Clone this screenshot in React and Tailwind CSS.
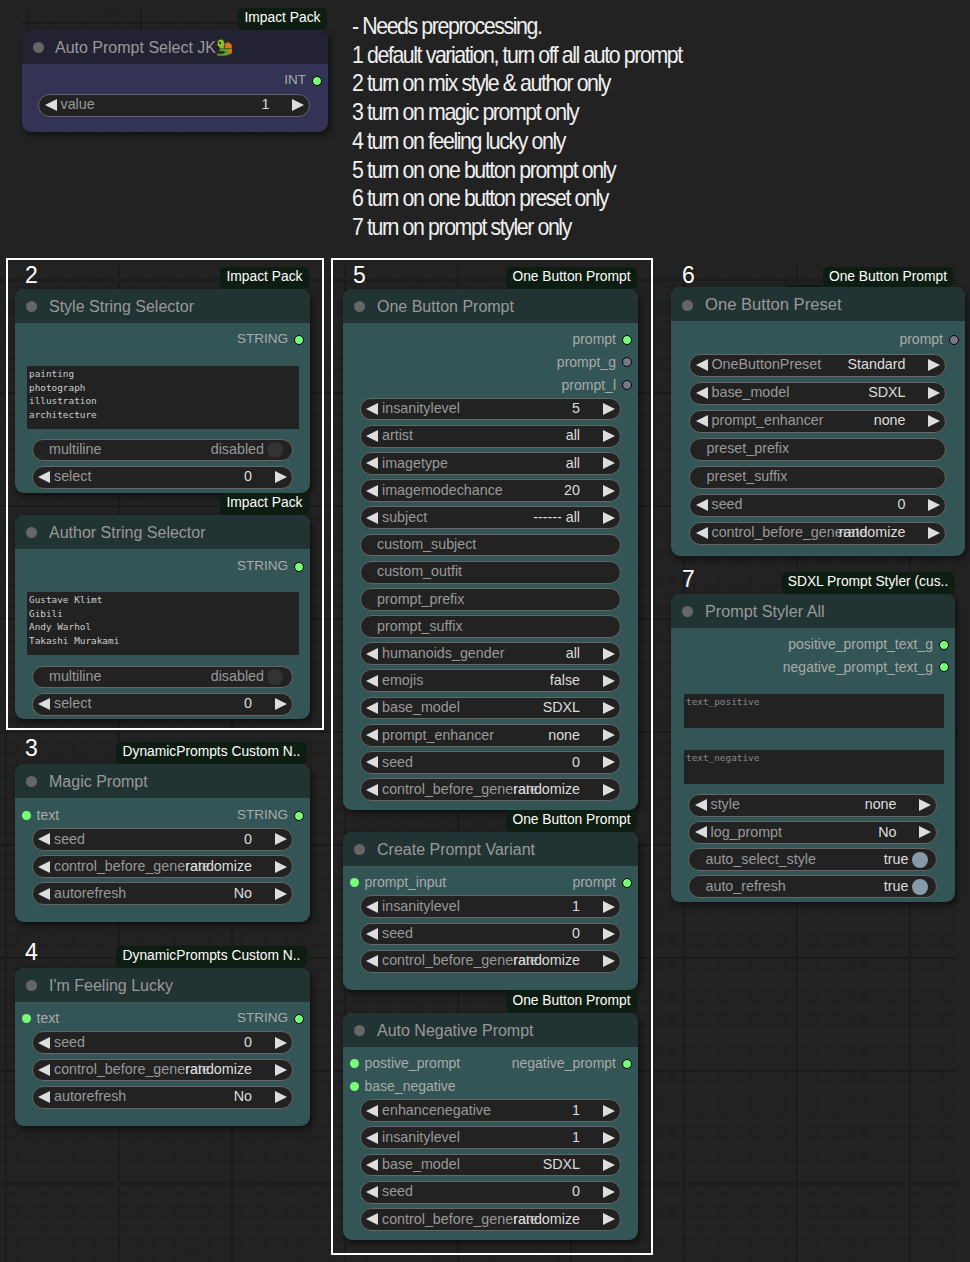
import React from "react";

const Left = () => (
  <svg width="12" height="12" viewBox="0 0 12 12" className="shrink-0">
    <polygon points="0,6 12,0 12,12" fill="#ddd" />
  </svg>
);
const Right = () => (
  <svg width="12" height="12" viewBox="0 0 12 12" className="shrink-0">
    <polygon points="12,6 0,0 0,12" fill="#ddd" />
  </svg>
);

function Combo({ label, value, h = "h-[22.8px]" }) {
  return (
    <div className={`${h} flex items-center rounded-full border-[1.5px] border-[#666] bg-[#222] pl-[5.5px] pr-[5px] text-[14.3px] whitespace-nowrap`}>
      <Left />
      <span className="ml-[4px] w-0 grow text-[#999]">{label}</span>
      <span className="relative text-[#ddd]">{value}</span>
      <span className="w-[22.5px] shrink-0" />
      <Right />
    </div>
  );
}
function TextW({ label, h = "h-[22.8px]" }) {
  return (
    <div className={`${h} flex items-center rounded-full border-[1.5px] border-[#666] bg-[#222] pl-[16.5px] text-[14.3px] text-[#999]`}>
      {label}
    </div>
  );
}
function Toggle({ label, value, on }) {
  return (
    <div className="h-[22.8px] flex items-center justify-between rounded-full border-[1.5px] border-[#666] bg-[#222] pl-[16.5px] pr-[8.5px] text-[14.3px] text-[#999]">
      <span>{label}</span>
      <span className="flex items-center gap-[3px]">
        <span className={on ? "text-[#ddd]" : "text-[#999]"}>{value}</span>
        <span className={on ? "h-[16px] w-[16px] rounded-full bg-[#89a]" : "h-[16px] w-[16px] rounded-full bg-[#333]"} />
      </span>
    </div>
  );
}
function Widgets({ className, children }) {
  return <div className={`flex flex-col gap-[4.4px] ${className}`}>{children}</div>;
}
function Slot({ l, r, rc = "bg-[#7f7]", rSize = "text-[14px]", className = "" }) {
  return (
    <div className={`h-[22.8px] flex items-center justify-between text-[14px] text-[#aaa] ${className}`}>
      <span className="flex items-center">
        {l && <span className="ml-[6.5px] h-[9px] w-[9px] rounded-full bg-[#7f7]" />}
        {l && <span className="ml-[6px]">{l}</span>}
      </span>
      {r && (
        <span className="flex items-center">
          <span className={`mr-[6px] ${rSize}`}>{r}</span>
          <span className={`mr-[6px] h-[10px] w-[10px] rounded-full border border-black ${rc}`} />
        </span>
      )}
    </div>
  );
}
function Area({ lines, placeholder, className }) {
  return (
    <div className={`bg-[#222] px-[2px] pt-[1px] font-['DejaVu_Sans_Mono',monospace] text-[9.4px] leading-[13.6px] whitespace-pre ${placeholder ? "text-[#888]" : "text-[#ccc]"} ${className}`}>
      {placeholder || lines.join("\n")}
    </div>
  );
}
function Dragon() {
  return (
    <svg width="17" height="18" viewBox="0 0 17 18" className="shrink-0">
      <path d="M9 4 L13 3 L16 6 L16 11 L11 12 L8 9 Z" fill="#e0701a" stroke="#3a2a10" strokeWidth="0.5" />
      <path d="M2 1 L6 0 L8 2 L9 5 L8 8 L10 11 L5 11 L3 8 L1 6 Z" fill="#8dbb2c" stroke="#1c3a10" strokeWidth="0.7" />
      <path d="M3 10 C8 10 13 9 16 10 C17 15 13 17 8 17 L1 17 L1 14 C4 15 8 15 9 13 C7 12 4 13 3 12 Z" fill="#5f9f2a" stroke="#1c3a10" strokeWidth="0.7" />
      <path d="M12 10.5 L16 10 L16 14 L13 15 Z" fill="#e0701a" />
      <path d="M3 3 L5 3 L5 5 L3 5 Z" fill="#1c3a10" />
    </svg>
  );
}
function Node({ pos, size, title, tone = "cyan", badge, badgeClass, badgePad = "pb-[1px]", titleClass = "text-[16px] pt-[1px]", titleExtra, children }) {
  const body = tone === "blue" ? "bg-[#335]" : "bg-[#355]";
  const head = tone === "blue" ? "bg-[#223]" : "bg-[#233]";
  const dot = tone === "blue" ? "mr-[11px]" : "mr-[12px]";
  return (
    <section className={`absolute ${pos} ${size} flex flex-col rounded-[9px] ${body} shadow-[2px_3px_6px_rgba(0,0,0,0.55)]`}>
      {badge && (
        <div className={`absolute bottom-full flex h-[22px] items-center justify-center rounded-[5px] bg-[#0e1d11] ${badgePad} text-[13.8px] text-white whitespace-nowrap ${badgeClass}`}>
          {badge}
        </div>
      )}
      <header className={`flex h-[34px] shrink-0 items-center rounded-t-[9px] ${head} ${titleClass} text-[#999]`}>
        <span className={`ml-[11px] ${dot} h-[11px] w-[11px] shrink-0 rounded-full bg-[#666]`} />
        {title}
        {titleExtra}
      </header>
      {children}
    </section>
  );
}
function Num({ pos, children }) {
  return <div className={`absolute ${pos} text-[23px] leading-[24px] text-white`}>{children}</div>;
}
function Grid({ className }) {
  return (
    <div
      aria-hidden="true"
      className={`absolute ${className} bg-[linear-gradient(to_right,#1b1b1b_2px,transparent_2px),linear-gradient(to_bottom,#1b1b1b_2px,transparent_2px),linear-gradient(to_right,#1e1e1e_1px,transparent_1px),linear-gradient(to_bottom,#1e1e1e_1px,transparent_1px)] bg-[size:113px_113px,113px_113px,11.3px_11.3px,11.3px_11.3px] bg-[position:5px_14px,5px_14px,5px_2.7px,5px_2.7px]`}
    />
  );
}

const CBG = "control_before_generate";
const S = "text-[13.5px]";
const notes = [
  "- Needs preprocessing.",
  "1 default variation, turn off all auto prompt",
  "2 turn on mix style & author only",
  "3 turn on magic prompt only",
  "4 turn on feeling lucky only",
  "5 turn on one button prompt only",
  "6 turn on one button preset only",
  "7 turn on prompt styler only",
];

export default function App() {
  return (
    <div className="relative h-[1262px] w-[970px] overflow-hidden bg-[#222] font-['Liberation_Sans',Arial,sans-serif]">
      <Grid className="left-[22px] top-[8px] h-[126px] w-[306px]" />
      <Grid className="left-0 top-[265px] h-[997px] w-[958px]" />

      {/* annotation frames */}
      <div className="absolute left-[6px] top-[258px] h-[472px] w-[318px] border-2 border-white" />
      <div className="absolute left-[331px] top-[258px] h-[997px] w-[322px] border-2 border-white" />

      <div className="absolute left-[352px] top-[12px] flex origin-left scale-x-[0.89] flex-col text-[24px] leading-[28.7px] tracking-[-1.6px] text-[#f0f0f0]">
        {notes.map((n) => (
          <div key={n} className="whitespace-nowrap">{n}</div>
        ))}
      </div>

      <Num pos="left-[25px] top-[263px]">2</Num>
      <Num pos="left-[25px] top-[736px]">3</Num>
      <Num pos="left-[25px] top-[940px]">4</Num>
      <Num pos="left-[353px] top-[263px]">5</Num>
      <Num pos="left-[682px] top-[263px]">6</Num>
      <Num pos="left-[682px] top-[567px]">7</Num>

      {/* 1 */}
      <Node pos="left-[22px] top-[30px]" size="w-[306px] h-[102px]" title="Auto Prompt Select JK" tone="blue" badge="Impact Pack" badgeClass="right-[1px] w-[89px]" titleExtra={<Dragon />}>
        <Slot r="INT" rSize={S} className="mt-[5.2px]" />
        <Widgets className="ml-[16px] mr-[18px] mt-[1.8px]">
          <Combo label="value" value="1" />
        </Widgets>
      </Node>

      {/* 2 */}
      <Node pos="left-[15px] top-[289px]" size="w-[295px] h-[204px]" title="Style String Selector" badge="Impact Pack" badgeClass="right-[1px] w-[89px]">
        <Slot r="STRING" rSize={S} className="mt-[5.2px]" />
        <Area className="ml-[12px] mr-[11px] mt-[15px] h-[63px]" lines={["painting", "photograph", "illustration", "architecture"]} />
        <Widgets className="ml-[16.5px] mr-[17.5px] mt-[9.6px]">
          <Toggle label="multiline" value="disabled" />
          <Combo label="select" value="0" />
        </Widgets>
      </Node>

      <Node pos="left-[15px] top-[515px]" size="w-[295px] h-[204px]" title="Author String Selector" badge="Impact Pack" badgeClass="right-[1px] w-[89px]">
        <Slot r="STRING" rSize={S} className="mt-[6.2px]" />
        <Area className="ml-[12px] mr-[11px] mt-[14px] h-[63px]" lines={["Gustave Klimt", "Gibili", "Andy Warhol", "Takashi Murakami"]} />
        <Widgets className="ml-[16.5px] mr-[17.5px] mt-[10.6px]">
          <Toggle label="multiline" value="disabled" />
          <Combo label="select" value="0" />
        </Widgets>
      </Node>

      {/* 3 */}
      <Node pos="left-[15px] top-[764px]" size="w-[295px] h-[158px]" title="Magic Prompt" badge="DynamicPrompts Custom N.." badgeClass="right-[3px] w-[191px]">
        <Slot l="text" r="STRING" rSize={S} className="mt-[6.2px]" />
        <Widgets className="ml-[16.5px] mr-[17.5px] mt-[1px]">
          <Combo label="seed" value="0" />
          <Combo label={CBG} value="randomize" />
          <Combo label="autorefresh" value="No" />
        </Widgets>
      </Node>

      {/* 4 */}
      <Node pos="left-[15px] top-[968px]" size="w-[295px] h-[158px]" title="I'm Feeling Lucky" badge="DynamicPrompts Custom N.." badgeClass="right-[3px] w-[191px]">
        <Slot l="text" r="STRING" rSize={S} className="mt-[5.2px]" />
        <Widgets className="ml-[16.5px] mr-[17.5px] mt-[1.4px]">
          <Combo label="seed" value="0" />
          <Combo label={CBG} value="randomize" />
          <Combo label="autorefresh" value="No" />
        </Widgets>
      </Node>

      {/* 5 */}
      <Node pos="left-[343px] top-[289px]" size="w-[295px] h-[521px]" title="One Button Prompt" badge="One Button Prompt" badgeClass="right-[1px] w-[131px]">
        <div className="mt-[5.2px] flex flex-col">
          <Slot r="prompt" />
          <Slot r="prompt_g" rc="bg-[#778]" />
          <Slot r="prompt_l" rc="bg-[#778]" />
        </div>
        <Widgets className="ml-[16.5px] mr-[17.5px] mt-[1px]">
          <Combo label="insanitylevel" value="5" />
          <Combo label="artist" value="all" />
          <Combo label="imagetype" value="all" />
          <Combo label="imagemodechance" value="20" />
          <Combo label="subject" value="------ all" />
          <TextW label="custom_subject" />
          <TextW label="custom_outfit" />
          <TextW label="prompt_prefix" />
          <TextW label="prompt_suffix" />
          <Combo label="humanoids_gender" value="all" />
          <Combo label="emojis" value="false" />
          <Combo label="base_model" value="SDXL" />
          <Combo label="prompt_enhancer" value="none" />
          <Combo label="seed" value="0" />
          <Combo label={CBG} value="randomize" />
        </Widgets>
      </Node>

      <Node pos="left-[343px] top-[832px]" size="w-[295px] h-[158px]" title="Create Prompt Variant" badge="One Button Prompt" badgeClass="right-[1px] w-[131px]">
        <Slot l="prompt_input" r="prompt" className="mt-[5.2px]" />
        <Widgets className="ml-[16.5px] mr-[17.5px] mt-[1.4px]">
          <Combo label="insanitylevel" value="1" />
          <Combo label="seed" value="0" />
          <Combo label={CBG} value="randomize" />
        </Widgets>
      </Node>

      <Node pos="left-[343px] top-[1013px]" size="w-[295px] h-[227px]" title="Auto Negative Prompt" badge="One Button Prompt" badgeClass="right-[1px] w-[131px]">
        <div className="mt-[5.2px] flex flex-col">
          <Slot l="postive_prompt" r="negative_prompt" />
          <Slot l="base_negative" />
        </div>
        <Widgets className="ml-[16.5px] mr-[17.5px] mt-[1.4px]">
          <Combo label="enhancenegative" value="1" />
          <Combo label="insanitylevel" value="1" />
          <Combo label="base_model" value="SDXL" />
          <Combo label="seed" value="0" />
          <Combo label={CBG} value="randomize" />
        </Widgets>
      </Node>

      {/* 6 */}
      <div className="absolute left-[785px] top-[285px] h-[2px] w-[50px] bg-[#0e1d11]" />
      <Node pos="left-[671px] top-[287px]" size="w-[294px] h-[269px]" title="One Button Preset" titleClass="text-[16.6px] pt-[2px]" badge="One Button Prompt" badgePad="pb-0" badgeClass="right-[12px] w-[130px] !h-[20px]">
        <Slot r="prompt" rc="bg-[#778]" className="mt-[7.2px]" />
        <div className="ml-[18px] mr-[19px] mt-[2.6px] flex flex-col gap-[5px]">
          <Combo h="h-[23px]" label="OneButtonPreset" value="Standard" />
          <Combo h="h-[23px]" label="base_model" value="SDXL" />
          <Combo h="h-[23px]" label="prompt_enhancer" value="none" />
          <TextW h="h-[23px]" label="preset_prefix" />
          <TextW h="h-[23px]" label="preset_suffix" />
          <Combo h="h-[23px]" label="seed" value="0" />
          <Combo h="h-[23px]" label={CBG} value="randomize" />
        </div>
      </Node>

      {/* 7 */}
      <Node pos="left-[671px] top-[594px]" size="w-[284px] h-[308px]" title="Prompt Styler All" titleClass="text-[16.2px] pt-[1px]" badge="SDXL Prompt Styler (cus.." badgeClass="right-[1px] w-[172px]">
        <div className="mt-[5.2px] flex flex-col">
          <Slot r="positive_prompt_text_g" />
          <Slot r="negative_prompt_text_g" />
        </div>
        <Area className="ml-[13px] mr-[11px] mt-[15.4px] h-[34px]" placeholder="text_positive" />
        <Area className="ml-[13px] mr-[11px] mt-[22px] h-[34px]" placeholder="text_negative" />
        <Widgets className="ml-[17px] mr-[18px] mt-[9.6px]">
          <Combo label="style" value="none" />
          <Combo label="log_prompt" value="No" />
          <Toggle label="auto_select_style" value="true" on />
          <Toggle label="auto_refresh" value="true" on />
        </Widgets>
      </Node>
    </div>
  );
}
